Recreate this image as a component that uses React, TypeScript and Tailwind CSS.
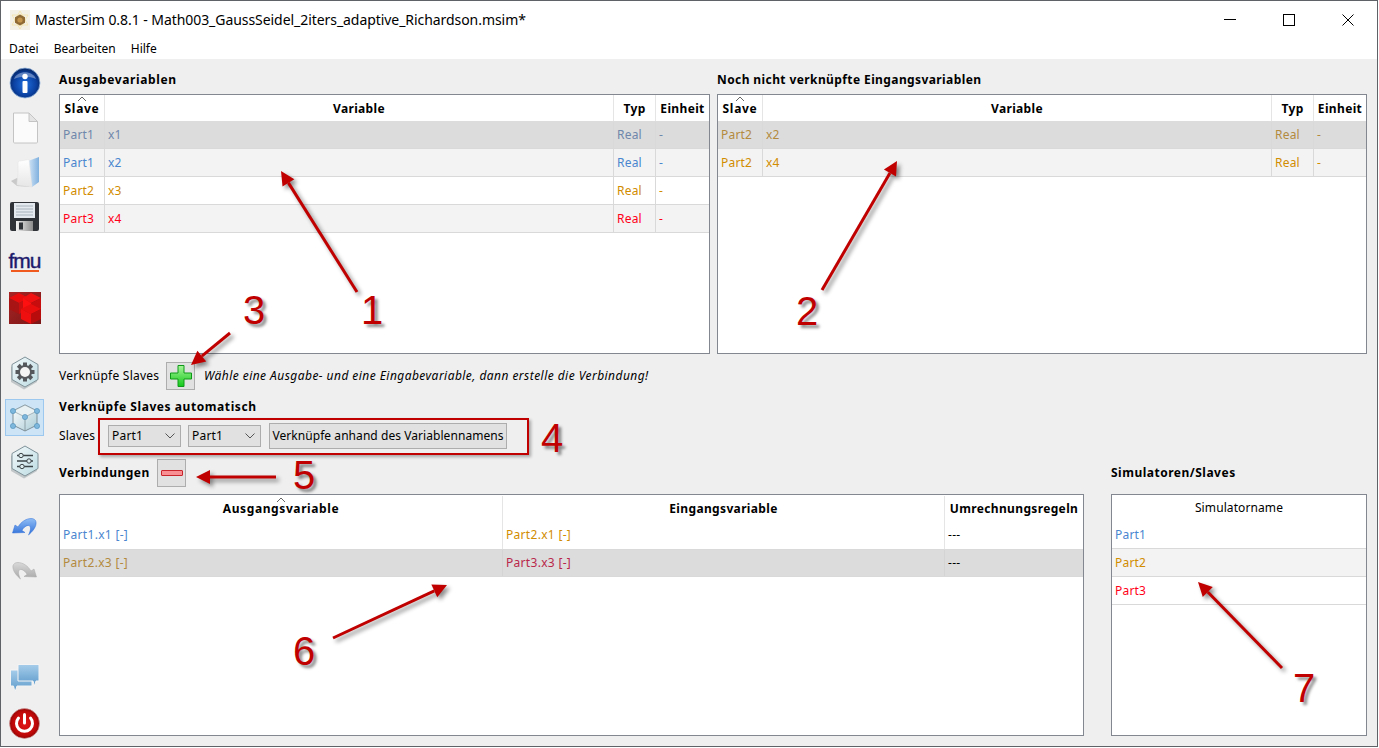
const PART_BLUE = 'text-[#4a86cf]'
const PART_ORANGE = 'text-[#d28c00]'
const PART_RED = 'text-[#ff0018]'
const SEL_BLUE = 'text-[#6f87ab]'
const SEL_ORANGE = 'text-[#b38a3e]'

const TABLE_FRAME = 'border border-[#828790] bg-white'
const HEADING = 'text-[12px] font-bold text-black leading-none'

type Row = { cells: string[]; tone: string; selected?: boolean; alt?: boolean }

const LEFT_COLS = 'grid-cols-[45px_509px_42px_1fr]'

const outputRows: Row[] = [
  { cells: ['Part1', 'x1', 'Real', '-'], tone: SEL_BLUE, selected: true },
  { cells: ['Part1', 'x2', 'Real', '-'], tone: PART_BLUE, alt: true },
  { cells: ['Part2', 'x3', 'Real', '-'], tone: PART_ORANGE },
  { cells: ['Part3', 'x4', 'Real', '-'], tone: PART_RED, alt: true },
]

const inputRows: Row[] = [
  { cells: ['Part2', 'x2', 'Real', '-'], tone: SEL_ORANGE, selected: true },
  { cells: ['Part2', 'x4', 'Real', '-'], tone: PART_ORANGE, alt: true },
]

function SortCaret() {
  return (
    <svg className="absolute left-1/2 top-[1px] -translate-x-1/2" width="10" height="6" viewBox="0 0 10 6">
      <path d="M1 5 L5 1 L9 5" fill="none" stroke="#666" strokeWidth="1" />
    </svg>
  )
}

function rowBg(row: Row) {
  if (row.selected) return 'bg-[#dcdcdc] pt-[1px]'
  return row.alt ? 'bg-[#f3f3f3]' : 'bg-white'
}

function VariableTable(props: { rows: Row[] }) {
  return (
    <div className={`${TABLE_FRAME} h-[260px]`}>
      <div className={`grid ${LEFT_COLS} h-[26px] text-[12px] font-bold text-black tracking-[0.35px]`}>
        <div className="relative flex items-center justify-center border-r border-[#e5e5e5] pt-[1px] tracking-[0.7px]">
          <SortCaret />
          Slave
        </div>
        <div className="flex items-center justify-center border-r border-[#e5e5e5] pt-[1px]">Variable</div>
        <div className="flex items-center justify-center border-r border-[#e5e5e5] pt-[1px]">Typ</div>
        <div className="flex items-center justify-center pt-[1px]">Einheit</div>
      </div>
      {props.rows.map((row) => (
        <div
          key={row.cells.join('-')}
          className={`grid ${LEFT_COLS} h-[28px] border-b border-[#d9d9d9] text-[12px] tracking-[0.2px] ${rowBg(row)} ${row.tone}`}
        >
          {row.cells.map((cell, i) => (
            <div key={i} className={`flex items-center pl-[3px] ${i < 3 ? 'border-r border-[#d9d9d9]' : ''}`}>
              {cell}
            </div>
          ))}
        </div>
      ))}
    </div>
  )
}

function ConnectionsTable() {
  const cols = 'grid-cols-[443px_442px_1fr]'
  return (
    <div className={`${TABLE_FRAME} flex-1`}>
      <div className={`grid ${cols} h-[26px] pt-[1px] text-[12px] font-bold text-black tracking-[0.35px]`}>
        <div className="relative flex items-center justify-center border-r border-[#e5e5e5] tracking-[0.6px]">
          <SortCaret />
          Ausgangsvariable
        </div>
        <div className="flex items-center justify-center border-r border-[#e5e5e5]">Eingangsvariable</div>
        <div className="flex items-center justify-center">Umrechnungsregeln</div>
      </div>
      <div className={`grid ${cols} h-[28px] text-[12px] tracking-[0.3px] bg-white`}>
        <div className={`flex items-center pl-[3px] border-r border-[#e5e5e5] ${PART_BLUE}`}>Part1.x1 [-]</div>
        <div className={`flex items-center pl-[3px] border-r border-[#e5e5e5] ${PART_ORANGE}`}>Part2.x1 [-]</div>
        <div className="flex items-center pl-[3px] text-black">---</div>
      </div>
      <div className={`grid ${cols} h-[28px] border-y border-[#d9d9d9] text-[12px] tracking-[0.3px] bg-[#dcdcdc]`}>
        <div className={`flex items-center pl-[3px] border-r border-[#d4d4d4] ${SEL_ORANGE}`}>Part2.x3 [-]</div>
        <div className="flex items-center pl-[3px] border-r border-[#d4d4d4] text-[#b9284a]">Part3.x3 [-]</div>
        <div className="flex items-center pl-[3px] text-black">---</div>
      </div>
    </div>
  )
}

function SimulatorTable() {
  const rows = [
    { name: 'Part1', tone: PART_BLUE, bg: 'bg-white' },
    { name: 'Part2', tone: PART_ORANGE, bg: 'bg-[#f3f3f3]' },
    { name: 'Part3', tone: PART_RED, bg: 'bg-white' },
  ]
  return (
    <div className={`${TABLE_FRAME} flex-1`}>
      <div className="flex h-[26px] items-center justify-center text-[12px] text-black tracking-[0.1px]">Simulatorname</div>
      {rows.map((r) => (
        <div key={r.name} className={`flex h-[28px] items-center border-b border-[#d9d9d9] pl-[3px] text-[12px] tracking-[0.2px] ${r.bg} ${r.tone}`}>
          {r.name}
        </div>
      ))}
    </div>
  )
}

function Combo() {
  return (
    <div className="flex h-[22px] w-[73px] items-center justify-between border border-[#adadad] bg-[#e1e1e1] pl-[3px] pr-[5px] text-[12px] tracking-[0.2px] text-black">
      Part1
      <svg width="10" height="6" viewBox="0 0 10 6">
        <path d="M0.5 0.5 L5 5 L9.5 0.5" fill="none" stroke="#555" strokeWidth="1" />
      </svg>
    </div>
  )
}

function IconInfo() {
  return (
    <svg width="32" height="32" viewBox="0 0 32 32">
      <defs>
        <radialGradient id="infoFill" cx="50%" cy="55%" r="55%">
          <stop offset="0%" stopColor="#1f6fe0" />
          <stop offset="70%" stopColor="#0a3f9e" />
          <stop offset="100%" stopColor="#06245f" />
        </radialGradient>
      </defs>
      <circle cx="16" cy="16" r="15" fill="url(#infoFill)" stroke="#8fb2dc" strokeWidth="0.8" />
      <path d="M5 12 C8 3 24 3 27 12 C20 9 12 9 5 12 Z" fill="#fff" opacity="0.35" />
      <circle cx="16" cy="9.5" r="2.7" fill="#fff" />
      <rect x="13.5" y="14" width="5" height="12" rx="1" fill="#fff" />
    </svg>
  )
}

function IconDoc() {
  return (
    <svg width="28" height="32" viewBox="0 0 28 32">
      <path d="M2.5 1 H18 L26.5 9.5 V30 C26.5 30.6 26 31 25.5 31 H3.5 C3 31 2.5 30.6 2.5 30 Z" fill="#fbfbfb" stroke="#c4c4c4" />
      <path d="M18 1 V9.5 H26.5 Z" fill="#e4e4e4" stroke="#c4c4c4" />
    </svg>
  )
}

function IconFolder() {
  return (
    <svg width="30" height="32" viewBox="0 0 30 32">
      <defs>
        <linearGradient id="folderFill" x1="0" y1="0" x2="1" y2="0">
          <stop offset="0%" stopColor="#d6e7f7" />
          <stop offset="100%" stopColor="#7fb0de" />
        </linearGradient>
        <linearGradient id="paperFill" x1="0" y1="0" x2="0" y2="1">
          <stop offset="0%" stopColor="#ffffff" />
          <stop offset="100%" stopColor="#e6e6e6" />
        </linearGradient>
      </defs>
      <path d="M1 25 L7 22 L20 31 L7 30 Z" fill="#c9c9c9" />
      <path d="M18 5 L29 1 V26 L22 31 Z" fill="url(#folderFill)" />
      <path d="M8 7 C8 5.5 9 5 10 5 L19 3.5 L22 31 L7 29 C7 24 8 20 8 16 Z" fill="url(#paperFill)" stroke="#e2e2e2" strokeWidth="0.5" />
    </svg>
  )
}

function IconFloppy() {
  return (
    <svg width="29" height="29" viewBox="0 0 29 29">
      <defs>
        <linearGradient id="shutterFill" x1="0" y1="0" x2="1" y2="0">
          <stop offset="0%" stopColor="#f2f2f2" />
          <stop offset="100%" stopColor="#8c8c8c" />
        </linearGradient>
      </defs>
      <rect width="29" height="29" rx="2" fill="#2f3338" />
      <rect x="4" y="1" width="21" height="15" fill="#e4e9ef" />
      <path d="M6 4 H23 M6 7 H23 M6 10 H23 M6 13 H23" stroke="#a9b2bc" strokeWidth="1" />
      <rect x="6" y="19" width="17" height="10" fill="url(#shutterFill)" />
      <rect x="9" y="20.5" width="4" height="7" fill="#2f3338" />
    </svg>
  )
}

function IconFmu() {
  return (
    <div className="flex w-[32px] flex-col items-center">
      <span className="font-['Liberation_Sans'] text-[21px] leading-[16px] tracking-[-1px] text-[#1d1a6b] [-webkit-text-stroke:0.4px_#1d1a6b]">fmu</span>
      <div className="mt-[1px] h-[2px] w-[28px] bg-[#f05a1e]" />
    </div>
  )
}

function IconRedCube() {
  return (
    <svg width="32" height="32" viewBox="0 0 32 32">
      <defs>
        <linearGradient id="redBg" x1="0" y1="0" x2="1" y2="1">
          <stop offset="0%" stopColor="#a82424" />
          <stop offset="100%" stopColor="#7a1616" />
        </linearGradient>
      </defs>
      <rect width="32" height="32" fill="url(#redBg)" />
      <polygon points="0,6 10,1 20,6 10,11" fill="#e80c0c" />
      <polygon points="0,6 10,11 10,22 0,17" fill="#a81414" />
      <polygon points="10,11 20,6 20,17 10,22" fill="#c81010" />
      <polygon points="14,6 22,1 32,6 22,11" fill="#f01010" />
      <polygon points="14,6 22,11 22,22 14,17" fill="#ff1010" />
      <polygon points="22,11 32,6 32,17 22,22" fill="#c70d0d" />
      <polygon points="12,17 22,12 32,17 22,22" fill="#e90e0e" />
      <polygon points="12,17 22,22 22,32 12,27" fill="#f00f0f" />
      <polygon points="22,22 32,17 32,27 22,32" fill="#b80c0c" />
    </svg>
  )
}

function Hexagon(props: { id: string; children: React.ReactNode }) {
  return (
    <svg width="34" height="34" viewBox="0 0 34 34">
      <defs>
        <linearGradient id={props.id} x1="0" y1="0" x2="1" y2="1">
          <stop offset="0%" stopColor="#f2f8fa" />
          <stop offset="100%" stopColor="#bcdce3" />
        </linearGradient>
      </defs>
      <polygon points="17,2 30,9.5 30,24.5 17,32 4,24.5 4,9.5" fill="#8a9498" opacity="0.45" transform="translate(-1 1.5)" />
      <polygon points="17,1 30,8.5 30,23.5 17,31 4,23.5 4,8.5" fill={`url(#${props.id})`} stroke="#7f9299" strokeWidth="1" />
      {props.children}
    </svg>
  )
}

function IconGear() {
  const teeth = [0, 45, 90, 135, 180, 225, 270, 315]
  return (
    <Hexagon id="hexGear">
      {teeth.map((a) => (
        <rect key={a} x="15" y="6.5" width="4" height="5" fill="#55585c" transform={`rotate(${a} 17 16)`} />
      ))}
      <circle cx="17" cy="16" r="7" fill="#55585c" />
      <circle cx="17" cy="16" r="5" fill="#f4f4f4" />
    </Hexagon>
  )
}

function IconNetwork() {
  return (
    <svg width="30" height="30" viewBox="0 0 30 30">
      <defs>
        <linearGradient id="cubeSide" x1="0" y1="0" x2="1" y2="1">
          <stop offset="0%" stopColor="#ffffff" />
          <stop offset="100%" stopColor="#a9cbd6" />
        </linearGradient>
      </defs>
      <polygon points="15,2 27,8 27,22 15,28 3,22 3,8" fill="url(#cubeSide)" stroke="#7d8f97" />
      <polygon points="15,2 27,8 15,14 3,8" fill="#e9f1f3" stroke="#7d8f97" strokeWidth="0.6" />
      <path d="M15 14 V28" stroke="#7d8f97" strokeWidth="0.8" />
      <circle cx="3" cy="8" r="2.6" fill="#7db7dd" stroke="#4e8db5" strokeWidth="0.6" />
      <circle cx="27" cy="8" r="2.6" fill="#7db7dd" stroke="#4e8db5" strokeWidth="0.6" />
      <circle cx="15" cy="14" r="2.6" fill="#7db7dd" stroke="#4e8db5" strokeWidth="0.6" />
      <circle cx="3" cy="23" r="2.6" fill="#7db7dd" stroke="#4e8db5" strokeWidth="0.6" />
      <circle cx="27" cy="23" r="2.6" fill="#7db7dd" stroke="#4e8db5" strokeWidth="0.6" />
    </svg>
  )
}

function IconSliders() {
  return (
    <Hexagon id="hexSliders">
      <path d="M9 10.5 H25 M9 16 H25 M9 21.5 H25" stroke="#3d4549" strokeWidth="1.5" />
      <circle cx="13" cy="10.5" r="2.2" fill="#dcebee" stroke="#3d4549" />
      <circle cx="21" cy="16" r="2.2" fill="#dcebee" stroke="#3d4549" />
      <circle cx="14" cy="21.5" r="2.2" fill="#dcebee" stroke="#3d4549" />
    </Hexagon>
  )
}

function IconUndo(props: { id: string; light: string; dark: string; flip?: boolean }) {
  return (
    <svg width="25" height="18" viewBox="0 0 25 18" className={props.flip ? '-scale-x-100' : ''}>
      <defs>
        <linearGradient id={props.id} x1="0" y1="0" x2="0" y2="1">
          <stop offset="0%" stopColor={props.light} />
          <stop offset="100%" stopColor={props.dark} />
        </linearGradient>
      </defs>
      <path
        d="M0.5 15 L3 7 L6 9 C9 4 14 0.5 19 0.5 C23 0.5 24.5 3 24 6 C23.5 10 20 14 16.5 17 C18.5 13 19.5 8.5 17 7.5 C14.5 7 11.5 9.5 10 12.5 L13 14.5 Z"
        fill={`url(#${props.id})`}
        stroke={props.dark}
        strokeWidth="0.5"
      />
    </svg>
  )
}

function IconChat() {
  return (
    <svg width="30" height="30" viewBox="0 0 30 30">
      <defs>
        <linearGradient id="chatFill" x1="0" y1="0" x2="0" y2="1">
          <stop offset="0%" stopColor="#a6cdea" />
          <stop offset="100%" stopColor="#5d9acb" />
        </linearGradient>
      </defs>
      <path d="M0.5 6 H22 V22 H7 L5 28 L3.5 22 H0.5 Z" fill="url(#chatFill)" stroke="#f4f4f4" />
      <path d="M8 0.5 H29 V17 H26 L24.5 22 L23 17 H8 Z" fill="url(#chatFill)" stroke="#f4f4f4" />
    </svg>
  )
}

function IconPower() {
  return (
    <svg width="31" height="31" viewBox="0 0 31 31">
      <defs>
        <radialGradient id="powerFill" cx="50%" cy="50%" r="52%">
          <stop offset="0%" stopColor="#e01616" />
          <stop offset="75%" stopColor="#c00808" />
          <stop offset="100%" stopColor="#8e0505" />
        </radialGradient>
      </defs>
      <circle cx="15.5" cy="15.5" r="15" fill="url(#powerFill)" stroke="#d0a0a0" strokeWidth="0.6" />
      <path d="M9.5 10 A8 8 0 1 0 21.5 10" fill="none" stroke="#fff" strokeWidth="3" strokeLinecap="round" />
      <path d="M15.5 6.5 V15" stroke="#fff" strokeWidth="3" strokeLinecap="round" />
    </svg>
  )
}

function IconApp() {
  return (
    <svg width="20" height="20" viewBox="0 0 20 20">
      <rect width="20" height="20" fill="#f3f0e8" />
      <path d="M10 1 L18 15 H2 Z M10 19 L2 5 H18 Z" fill="none" stroke="#f3e2a8" strokeWidth="0.8" />
      <polygon points="10,4.5 15,7.2 15,12.8 10,15.5 5,12.8 5,7.2" fill="#8f6a35" />
      <circle cx="10" cy="10" r="2.6" fill="#c4954c" />
    </svg>
  )
}

function ToolSlot(props: { children: React.ReactNode; active?: boolean; extraTop?: boolean }) {
  return (
    <div className={`flex h-[44.5px] w-full shrink-0 items-center justify-center ${props.extraTop ? 'mt-[1px]' : ''}`}>
      {props.active ? (
        <div className="flex h-[37px] w-[39px] items-center justify-center border border-[#9cc7ee] bg-[#cde4f7]">{props.children}</div>
      ) : (
        props.children
      )}
    </div>
  )
}

function Sidebar() {
  return (
    <div className="flex h-full w-[58px] flex-col pr-[11px] pt-[2px]">
      <ToolSlot><IconInfo /></ToolSlot>
      <ToolSlot><IconDoc /></ToolSlot>
      <ToolSlot><IconFolder /></ToolSlot>
      <ToolSlot><IconFloppy /></ToolSlot>
      <ToolSlot extraTop><IconFmu /></ToolSlot>
      <ToolSlot extraTop><IconRedCube /></ToolSlot>
      <div className="h-[21px] shrink-0" />
      <ToolSlot><IconGear /></ToolSlot>
      <ToolSlot active><IconNetwork /></ToolSlot>
      <ToolSlot><IconSliders /></ToolSlot>
      <div className="h-[20px] shrink-0" />
      <ToolSlot><IconUndo id="undoFill" light="#8fbdf5" dark="#2f6fd8" /></ToolSlot>
      <ToolSlot><IconUndo id="redoFill" light="#d9d9d9" dark="#a8a8a8" flip /></ToolSlot>
      <div className="flex-1" />
      <ToolSlot><IconChat /></ToolSlot>
      <ToolSlot><IconPower /></ToolSlot>
    </div>
  )
}

function Arrow(props: { x1: number; y1: number; x2: number; y2: number }) {
  const { x1, y1, x2, y2 } = props
  const len = Math.hypot(x2 - x1, y2 - y1)
  const ux = (x2 - x1) / len
  const uy = (y2 - y1) / len
  const bx = x2 - ux * 14
  const by = y2 - uy * 14
  const head = `${x2},${y2} ${bx - uy * 7},${by + ux * 7} ${bx + uy * 7},${by - ux * 7}`
  return (
    <g>
      <line x1={x1} y1={y1} x2={bx} y2={by} stroke="#c00000" strokeWidth="3" />
      <polygon points={head} fill="#c00000" />
    </g>
  )
}

const NUMBER = "absolute font-['Liberation_Sans'] text-[40px] leading-none text-[#c00000] [text-shadow:3px_3px_3px_rgba(0,0,0,0.45)]"

function Annotations() {
  return (
    <>
      <svg className="pointer-events-none absolute left-0 top-0 drop-shadow-[3px_3px_2px_rgba(0,0,0,0.45)]" width="1379" height="748">
        <Arrow x1={357} y1={292} x2={281} y2={171} />
        <Arrow x1={822} y1={290} x2={897} y2={161} />
        <Arrow x1={230} y1={333} x2={191} y2={365} />
        <Arrow x1={276} y1={477} x2={196} y2={477} />
        <Arrow x1={333} y1={638} x2={447} y2={585} />
        <Arrow x1={1282} y1={668} x2={1198} y2={582} />
      </svg>
      <div className="pointer-events-none absolute left-[98px] top-[418px] h-[37px] w-[431px] border-2 border-[#c00000] shadow-[2px_2px_3px_rgba(0,0,0,0.3)]" />
      <span className={`${NUMBER} left-[361px] top-[290px]`}>1</span>
      <span className={`${NUMBER} left-[796px] top-[291px]`}>2</span>
      <span className={`${NUMBER} left-[243px] top-[290px]`}>3</span>
      <span className={`${NUMBER} left-[541px] top-[418px]`}>4</span>
      <span className={`${NUMBER} left-[293px] top-[455px]`}>5</span>
      <span className={`${NUMBER} left-[293px] top-[631px]`}>6</span>
      <span className={`${NUMBER} left-[1293px] top-[668px]`}>7</span>
    </>
  )
}

export default function App() {
  return (
    <div className="relative h-[748px] w-[1379px] overflow-hidden bg-white font-['Noto_Sans',sans-serif]">
      <div className="flex h-[747px] w-[1378px] flex-col border border-[#5f6368]">
        <div className="flex h-[37px] shrink-0 items-center bg-white">
          <div className="ml-[9px]">
            <IconApp />
          </div>
          <div className="ml-[5px] text-[14px] tracking-[-0.06px] text-black">MasterSim 0.8.1 - Math003_GaussSeidel_2iters_adaptive_Richardson.msim*</div>
          <div className="flex-1" />
          <div className="flex w-[177px] items-center text-black">
            <div className="flex w-[59px] justify-center">
              <div className="h-[1px] w-[12px] bg-black" />
            </div>
            <div className="flex w-[59px] justify-center">
              <div className="h-[12px] w-[12px] border border-black" />
            </div>
            <div className="flex w-[59px] justify-center">
              <svg width="12" height="12" viewBox="0 0 12 12">
                <path d="M0.5 0.5 L11.5 11.5 M11.5 0.5 L0.5 11.5" stroke="#000" strokeWidth="1" />
              </svg>
            </div>
          </div>
        </div>
        <div className="flex h-[21px] shrink-0 items-center gap-[15px] bg-white pl-[8px] text-[12px] text-black">
          <span>Datei</span>
          <span>Bearbeiten</span>
          <span>Hilfe</span>
        </div>

        <div className="flex min-h-0 flex-1 bg-[#efefef]">
          <Sidebar />
          <div className="flex min-w-0 flex-1 flex-col pr-[10px]">
            <div className="grid grid-cols-[651px_650px] gap-x-[7px]">
              <div>
                <div className={`${HEADING} flex h-[35px] items-center pt-[6px] tracking-[0.62px]`}>Ausgabevariablen</div>
                <VariableTable rows={outputRows} />
              </div>
              <div>
                <div className={`${HEADING} flex h-[35px] items-center pt-[6px] tracking-[0.4px]`}>Noch nicht verknüpfte Eingangsvariablen</div>
                <VariableTable rows={inputRows} />
              </div>
            </div>

            <div className="mt-[8px] flex h-[28px] items-center text-[12px] tracking-[0.25px] text-black">
              <span className="w-[107px]">Verknüpfe Slaves</span>
              <div className="flex h-[28px] w-[29px] items-center justify-center border border-[#adadad] bg-[#e1e1e1]">
                <svg width="24" height="24" viewBox="0 0 24 24">
                  <defs>
                    <linearGradient id="plusFill" x1="0" y1="0" x2="0" y2="1">
                      <stop offset="0%" stopColor="#a8f59a" />
                      <stop offset="100%" stopColor="#12c81a" />
                    </linearGradient>
                  </defs>
                  <path d="M9 1.5 H15 V9 H22.5 V15 H15 V22.5 H9 V15 H1.5 V9 H9 Z" fill="url(#plusFill)" stroke="#0e9a18" strokeWidth="1" />
                </svg>
              </div>
              <span className="ml-[9px] italic tracking-[0.45px]">Wähle eine Ausgabe- und eine Eingabevariable, dann erstelle die Verbindung!</span>
            </div>

            <div className={`${HEADING} mt-[9px] flex h-[16px] items-center tracking-[0.57px]`}>Verknüpfe Slaves automatisch</div>

            <div className="mt-[8px] flex h-[26px] items-center text-[12px] tracking-[0.2px] text-black">
              <span className="w-[49px]">Slaves</span>
              <Combo />
              <div className="w-[7px]" />
              <Combo />
              <div className="w-[8px]" />
              <div className="flex h-[26px] w-[238px] items-center justify-center whitespace-nowrap border border-[#adadad] bg-[#e1e1e1] tracking-[0.06px]">
                Verknüpfe anhand des Variablennamens
              </div>
            </div>

            <div className="mt-[10px] flex min-h-0 flex-1 gap-[27px] pb-[10px]">
              <div className="flex w-[1025px] flex-col">
                <div className="flex h-[35px] items-start">
                  <span className={`${HEADING} mt-[8px] w-[98px] tracking-[0.5px]`}>Verbindungen</span>
                  <div className="flex h-[28px] w-[29px] items-center justify-center border border-[#adadad] bg-[#e1e1e1]">
                    <div className="h-[6px] w-[22px] rounded-[1px] border border-[#c8242c] bg-[#f78f93]" />
                  </div>
                </div>
                <ConnectionsTable />
              </div>
              <div className="flex w-[256px] flex-col">
                <div className={`${HEADING} flex h-[35px] items-start pt-[8px] tracking-[0.5px]`}>Simulatoren/Slaves</div>
                <SimulatorTable />
              </div>
            </div>
          </div>
        </div>
      </div>
      <Annotations />
    </div>
  )
}
